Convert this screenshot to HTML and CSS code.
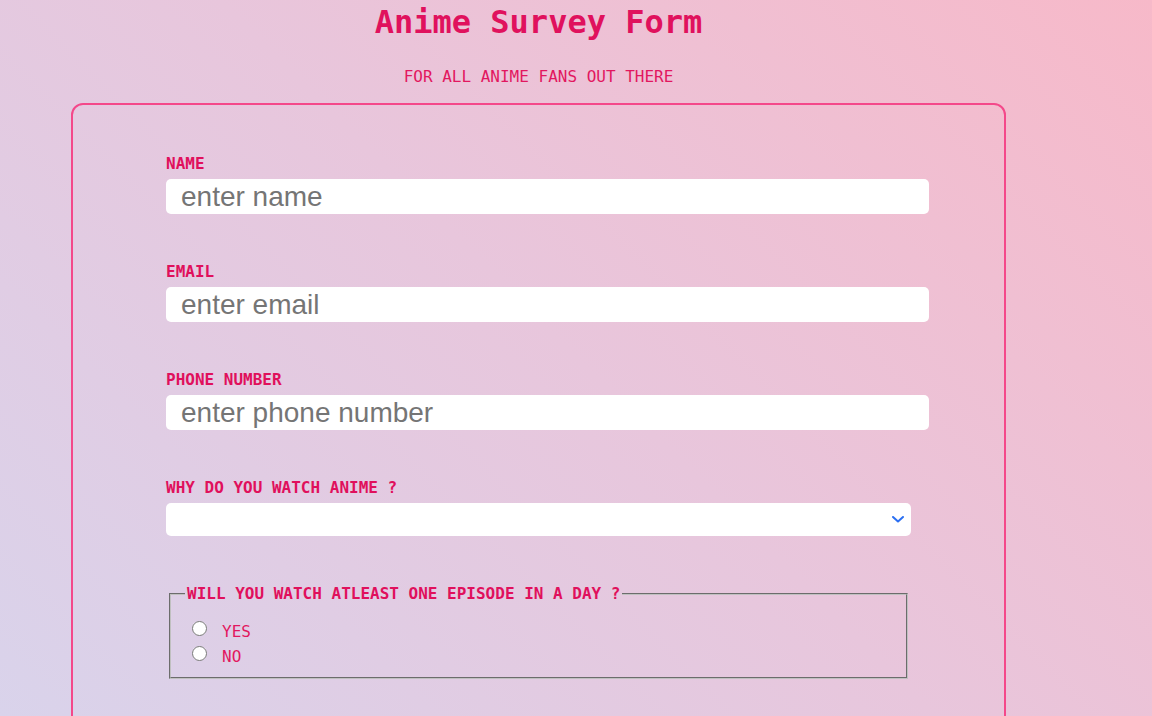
FILE: index.html
```html
<!DOCTYPE html>
<html lang="en">
<head>
<meta charset="utf-8">
<title>Anime Survey Form</title>
<link rel="stylesheet" href="styles.css">
</head>
<body>
<div class="page">
  <h1 class="title">Anime Survey Form</h1>
  <p class="subtitle">FOR ALL ANIME FANS OUT THERE</p>
  <form class="survey">
    <div class="group">
      <label class="label" for="name">NAME</label>
      <input class="field" id="name" type="text" placeholder="enter name">
    </div>
    <div class="group">
      <label class="label" for="email">EMAIL</label>
      <input class="field" id="email" type="email" placeholder="enter email">
    </div>
    <div class="group">
      <label class="label" for="phone">PHONE NUMBER</label>
      <input class="field" id="phone" type="text" placeholder="enter phone number">
    </div>
    <div class="group">
      <label class="label" for="why">WHY DO YOU WATCH ANIME ?</label>
      <select class="dropdown" id="why">
        <option></option>
        <option>Story</option>
        <option>Characters</option>
        <option>Art</option>
      </select>
    </div>
    <fieldset class="choice">
      <legend class="legend">WILL YOU WATCH ATLEAST ONE EPISODE IN A DAY ?</legend>
      <div class="options">
        <div class="option"><input class="radio" type="radio" name="daily" id="yes"><label class="opt-label" for="yes">YES</label></div>
        <div class="option"><input class="radio" type="radio" name="daily" id="no"><label class="opt-label" for="no">NO</label></div>
      </div>
    </fieldset>
  </form>
</div>
</body>
</html>
```
FILE: styles.css
```css
html, body {
  margin: 0;
  padding: 0;
}

body {
  min-height: 716px;
  background: linear-gradient(45deg, #d9d3eb 0%, #e8c6dc 50%, #f7b9c9 100%);
  background-attachment: fixed;
  font-family: "DejaVu Sans Mono", monospace;
  color: #e0125e;
}

.page {
  width: 935px;
  margin-left: 71px;
}

.title {
  margin: 4px 0 0;
  font-size: 32px;
  line-height: 37px;
  font-weight: bold;
  text-align: center;
  color: #e0115d;
}

.subtitle {
  margin: 26px 0 0;
  font-size: 16px;
  line-height: 19px;
  text-align: center;
  color: #e2175f;
}

.survey {
  margin-top: 17px;
  border: 2px solid #f4488a;
  border-radius: 12px;
  padding: 49px 93px 200px;
}

.group {
  display: flex;
  flex-direction: column;
  align-items: flex-start;
  margin-bottom: 48px;
}

.label {
  display: block;
  font-size: 16px;
  line-height: 19px;
  font-weight: bold;
  color: #e0105c;
  margin-bottom: 6px;
}

.field {
  box-sizing: border-box;
  width: 763px;
  height: 35px;
  border: none;
  border-radius: 5px;
  background: #ffffff;
  padding: 0 15px;
  font-family: "Liberation Sans", Arial, sans-serif;
  font-size: 28px;
  color: #333;
  outline: none;
}

.field::placeholder {
  color: #757575;
}

.dropdown {
  box-sizing: border-box;
  width: 745px;
  height: 33px;
  border: none;
  border-radius: 5px;
  background-color: #ffffff;
  background-image: url("data:image/svg+xml;utf8,<svg xmlns='http://www.w3.org/2000/svg' width='12' height='7' viewBox='0 0 12 7'><path d='M1 1 L6 5.5 L11 1' fill='none' stroke='%232b6ff2' stroke-width='2' stroke-linecap='round' stroke-linejoin='round'/></svg>");
  background-repeat: no-repeat;
  background-position: right 7px center;
  -webkit-appearance: none;
  appearance: none;
  font-family: "Liberation Sans", Arial, sans-serif;
  font-size: 16px;
  padding: 0 30px 0 10px;
  outline: none;
}

.choice {
  box-sizing: border-box;
  width: 739px;
  margin: 0 0 0 3px;
  border: 2px groove #c0c0c0;
  padding: 0 12px 10px;
}

.legend {
  font-size: 16px;
  line-height: 19px;
  font-weight: bold;
  color: #e0105c;
  padding: 0 2px;
  margin-left: 2px;
}

.options {
  margin-top: 14px;
  padding-left: 9px;
}

.option {
  display: flex;
  align-items: center;
  height: 25px;
}

.radio {
  width: 15px;
  height: 15px;
  margin: 0 15px 0 0;
  position: relative;
  top: -1px;
}

.opt-label {
  font-size: 16px;
  line-height: 25px;
  color: #e2175f;
  position: relative;
  top: 2px;
}
```
